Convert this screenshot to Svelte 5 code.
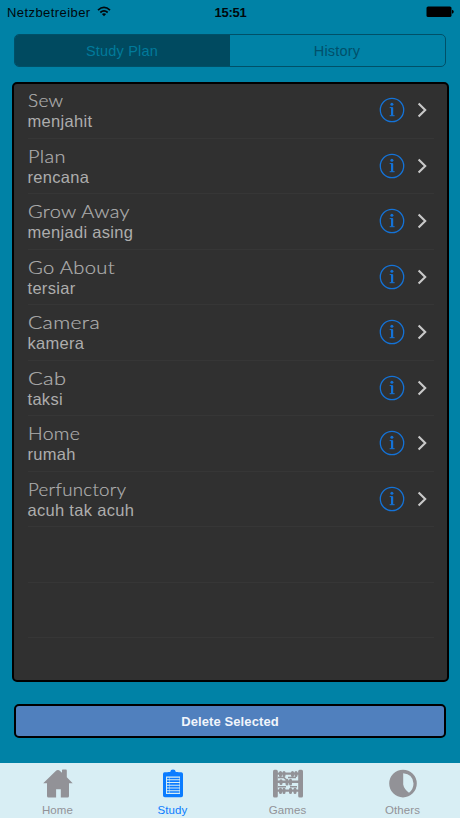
<script>
  const words = [
    { term: 'Sew', meaning: 'menjahit', stretch: 1.03 },
    { term: 'Plan', meaning: 'rencana', stretch: 1.08 },
    { term: 'Grow Away', meaning: 'menjadi asing', stretch: 1.08 },
    { term: 'Go About', meaning: 'tersiar', stretch: 1.09 },
    { term: 'Camera', meaning: 'kamera', stretch: 1.14 },
    { term: 'Cab', meaning: 'taksi', stretch: 1.18 },
    { term: 'Home', meaning: 'rumah', stretch: 1.05 },
    { term: 'Perfunctory', meaning: 'acuh tak acuh', stretch: 1.01 }
  ];
  const tabs = ['Home', 'Study', 'Games', 'Others'];
</script>

<div class="screen">
  <header class="status">
    <div class="carrier">
      <span>Netzbetreiber</span>
      <svg width="14" height="11" viewBox="0 0 14 11" fill="none" stroke="#00080c" stroke-width="1.7">
        <path d="M1 4.1Q7-1.4 13 4.1M3.3 6.5Q7 3.1 10.7 6.5" />
        <path d="M4.9 8.1Q7 6.3 9.1 8.1L7 10.3Z" fill="#00080c" stroke="none" />
      </svg>
    </div>
    <time>15:51</time>
    <svg class="battery" width="28" height="12" viewBox="0 0 28 12">
      <rect x="0.5" y="0.5" width="25" height="10.5" rx="1.6" />
      <path d="M26 3.7q1.8.5 1.8 2t-1.8 2z" />
    </svg>
  </header>

  <div class="segments">
    <button class="on">Study Plan</button>
    <button>History</button>
  </div>

  <main class="panel">
    {#each words as w}
      <div class="row">
        <div class="text">
          <div class="term" style="transform: scaleX({w.stretch})">{w.term}</div>
          <div class="meaning">{w.meaning}</div>
        </div>
        <svg class="info" width="26" height="26" viewBox="0 0 26 26">
          <circle cx="13" cy="13" r="11.7" fill="none" stroke="#1473d8" stroke-width="1.3" />
          <circle cx="12.9" cy="7.2" r="1.5" fill="#1473d8" />
          <path d="M10.7 10.6H13.5V18.4M10.7 18.7H15.6" fill="none" stroke="#1473d8" stroke-width="1" />
          <path d="M12 10.6h2.2v8h-2.2z" fill="#1473d8" />
        </svg>
        <svg class="chevron" width="11" height="16" viewBox="0 0 11 16">
          <path d="M1.6 1.6L8.2 8L1.6 14.4" fill="none" stroke="#c9c9c9" stroke-width="2.1" />
        </svg>
      </div>
    {/each}
    <div class="row"></div>
    <div class="row"></div>
  </main>

  <button class="delete">Delete Selected</button>

  <nav>
    {#each tabs as tab}
      <div class="tab" class:active={tab === 'Study'}>
        <svg width="32" height="30" viewBox="0 0 32 30" fill="currentColor">
          {#if tab === 'Home'}
            <path d="M1.2 14.2L13.5 2.2Q16 0 18.3 2.2L20 3.7V1.2Q20 .6 20.7.6H24Q24.8.6 24.8 1.4V8.3L30.7 14.2H27V27Q27 28.5 25.5 28.5H18.8V20.2H14.1V28.5H6.5Q5 28.5 5 27V14.2Z" />
          {:else if tab === 'Study'}
            <path fill-rule="evenodd" d="M7.5 3.3H24.2Q26 3.3 26 5.1V26.4Q26 28.2 24.2 28.2H7.8Q6 28.2 6 26.4V5Q6 3.3 7.5 3.3ZM9 7.5V25H23V7.5Z" />
            <path d="M10.5 6.8V4.3Q10.5 3 12 3H13.2Q13.5.6 16 .6T18.8 3H20Q21.5 3 21.5 4.3V6.8Z" />
            <path d="M10 9.5H22.5M10 12.2H22.5M10 14.9H22.5M10 17.6H22.5M10 20.3H22.5M10 23H22.5" stroke="currentColor" stroke-width="1.7" stroke-dasharray="2 .4 10.1 1" />
          {:else if tab === 'Games'}
            <rect x="1" y=".8" width="4.8" height="27.8" rx="1.5" />
            <rect x="26.2" y=".8" width="4.8" height="27.8" rx="1.5" />
            <path d="M5 4.6H27M5 12.8H27M5 21.6H27" stroke="currentColor" stroke-width="2.4" />
            <path d="M8.5 3.5V6.5M12 3.5V6.5M20.5 3.5V6.5M24 3.5V6.5M9 11.8V14.5M15 11.2V15M18.5 11.2V15M8.5 20.2V23.5M12 20.2V23.5M18.5 20.2V23.5M23 20.2V23.5" stroke="currentColor" stroke-width="3" stroke-linecap="round" />
            <path d="M6 8.6H12L14 10.5M16 8.6H24M6 17.8H14M18 17.8H25" stroke="currentColor" stroke-width="1.5" fill="none" />
          {:else}
            <path fill-rule="evenodd" d="M16 .8A13.8 13.8 0 1 1 16 28.4A13.8 13.8 0 1 1 16 .8ZM16.2 4.2V15.5Q17 20 22 23.8Q26.5 20 26.5 14.4Q26 5 16.2 4.2Z" />
          {/if}
        </svg>
        <span>{tab}</span>
      </div>
    {/each}
  </nav>
</div>

<style>
  :global(body) { margin: 0; }
  .screen {
    width: 460px; height: 818px; box-sizing: border-box; overflow: hidden;
    display: flex; flex-direction: column;
    background: #0082a6;
    font-family: "Liberation Sans", Arial, sans-serif;
  }
  button { font-family: inherit; padding: 0; margin: 0; }
  .status {
    height: 24px; flex: none; padding: 0 6px 0 7px;
    display: grid; grid-template-columns: 1fr auto 1fr; align-items: center;
    font-size: 13px; color: #00080c;
  }
  .carrier { display: flex; align-items: center; gap: 6px; letter-spacing: 0.43px; }
  .carrier svg { margin-top: -2px; }
  time { font-weight: 700; font-size: 13px; letter-spacing: -0.2px; }
  .battery { justify-self: end; fill: #000; }
  .segments {
    height: 33px; flex: none; box-sizing: border-box; margin: 10px 14px 0;
    display: flex;
    border: 1px solid #005068; border-radius: 5px; overflow: hidden;
  }
  .segments button {
    flex: 1 1 0; min-width: 0; box-sizing: border-box; border: 0;
    background: none; color: #00506a;
    font-size: 14.5px; letter-spacing: 0.2px; padding-right: 1px;
  }
  .segments .on { background: #004a60; color: #007a9b; }
  .panel {
    box-sizing: border-box; height: 600px; flex: none; margin: 15px 11.5px 0 11.5px;
    border: 2.5px solid #000; border-radius: 5px; background: #303030;
    overflow: hidden;
  }
  .row {
    height: 55.5px; box-sizing: border-box; margin: 0 13px 0 14px;
    border-bottom: 1px solid #363636; display: flex; align-items: center;
  }
  .row:first-child { margin-top: -1px; }
  .text { flex: 1; padding-top: 1px; }
  .term {
    font-family: Lato, "Open Sans", sans-serif; font-weight: 300;
    font-size: 18.5px; line-height: 21px; letter-spacing: 0.3px;
    color: #b0b0b0; white-space: nowrap; transform-origin: left center;
    -webkit-text-stroke: 0.2px #b0b0b0;
  }
  .meaning { font-size: 16.5px; line-height: 20px; letter-spacing: 0.3px; color: #adadad; }
  .info { margin-right: 12px; }
  .chevron { margin-right: 6px; }
  .delete {
    box-sizing: border-box; height: 34px; flex: none; margin: 22px 14px 0;
    border: 2.5px solid #000; border-radius: 5px; background: #5080be;
    color: #f1f5fb; font-size: 13px; font-weight: 700; letter-spacing: 0.1px;
  }
  nav {
    margin-top: auto; height: 55px; flex: none; display: flex;
    background: #d8eef4;
  }
  .tab {
    width: 115px; display: flex; flex-direction: column; align-items: center;
    padding-top: 6px; color: #929297; font-size: 11.5px; letter-spacing: 0.1px;
  }
  .tab svg { flex: none; }
  .tab span { line-height: 13px; margin-top: 5px; }
  .tab.active { color: #0b7cff; }
</style>
